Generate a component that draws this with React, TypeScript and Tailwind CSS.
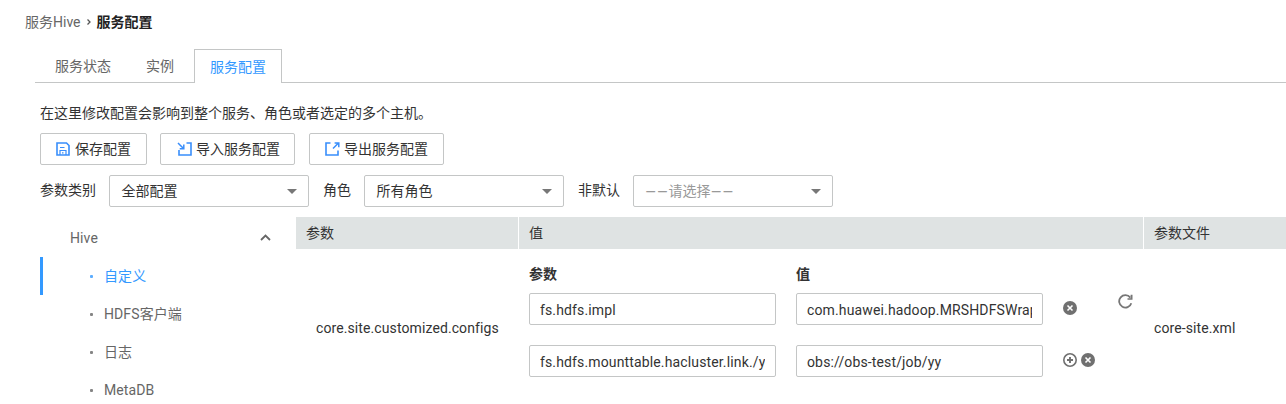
import React from "react";

const SaveIcon = () => (
  <svg width="14" height="14" viewBox="0 0 14 14" fill="none" stroke="#398efb" strokeWidth="1.6">
    <path d="M1 1H10.5L13 3.5V13H1Z" />
    <path d="M4 13V8.5H10V13M4 5.5H8.5M6 10.8H7.5" strokeWidth="1.2" />
  </svg>
);

const ImportIcon = () => (
  <svg width="15" height="14" viewBox="0 0 15 14" fill="none" stroke="#398efb" strokeWidth="1.6">
    <path d="M9.5 1H14V13H2V8" />
    <path d="M1 1L6 6M6.8 2.5V6.7H2.7" strokeWidth="1.5" />
  </svg>
);

const ExportIcon = () => (
  <svg width="15" height="14" viewBox="0 0 15 14" fill="none" stroke="#398efb" strokeWidth="1.6">
    <path d="M5.5 1H1V13H13V8.5" />
    <path d="M8 6.5L13 1.5M9.6 1H13.8V5.2" strokeWidth="1.5" />
  </svg>
);

const RemoveIcon = () => (
  <svg width="14" height="14" viewBox="0 0 14 14">
    <circle cx="7" cy="7" r="7" fill="#707070" />
    <path d="M4.5 4.5L9.5 9.5M9.5 4.5L4.5 9.5" stroke="#fff" strokeWidth="1.6" />
  </svg>
);

const AddIcon = () => (
  <svg width="14" height="14" viewBox="0 0 14 14" fill="none" stroke="#707070">
    <circle cx="7" cy="7" r="6.2" strokeWidth="1.6" />
    <path d="M7 4V10M4 7H10" strokeWidth="1.9" />
  </svg>
);

const RefreshIcon = () => (
  <svg width="15" height="15" viewBox="0 0 15 15">
    <path d="M12.3 3.6A6.2 6.2 0 1 0 13.3 9.2" fill="none" stroke="#777" strokeWidth="1.8" />
    <path d="M14.5 0.8V5.8H9.5V4.2H12.6V0.8Z" fill="#777" />
  </svg>
);

const Button = ({ icon, label, className }: { icon: React.ReactNode; label: string; className: string }) => (
  <button className={`flex h-8 items-center rounded-[2px] border border-[#c4c6c6] text-[#333] ${className}`}>
    {icon}
    <span>{label}</span>
  </button>
);

const Select = ({ value, muted }: { value: string; muted?: boolean }) => (
  <div className={`flex h-8 w-[200px] items-center justify-between rounded-[2px] border border-[#c4c6c6] pr-[11px] pl-[11.5px] ${muted ? "font-['DejaVu_Sans','Noto_Sans_CJK_SC',sans-serif] text-[#999]" : "text-[#333]"}`}>
    <span className={muted ? "-ml-[0.5px]" : ""}>{value}</span>
    <svg width="10" height="5" viewBox="0 0 10 5"><path d="M0 0H10L5 5Z" fill="#777" /></svg>
  </div>
);

const Field = ({ value }: { value: string }) => (
  <div className="h-8 w-[247px] rounded-[2px] border border-[#c4c6c6] px-2.5">
    <div className="overflow-hidden whitespace-nowrap leading-8 tracking-[0.14px]">{value}</div>
  </div>
);

const NavItem = ({ label, active }: { label: string; active?: boolean }) => (
  <li className={`flex h-[38px] items-center border-l-[3px] pl-[47px] ${active ? "border-[#3399ff] text-[#3399ff]" : "border-transparent text-[#666]"}`}>
    <span className="mr-[11px] size-[3px] rounded-[1px] bg-current opacity-80" />
    {label}
  </li>
);

export default function App() {
  return (
    <div className="h-[404px] w-[1286px] overflow-hidden bg-white font-[Roboto,'Noto_Sans_CJK_SC',sans-serif] text-[14px] leading-5 text-[#333]">
      <nav className="flex h-[49px] pt-3 pl-[25px]">
        <span className="text-[#666]">服务Hive</span>
        <svg className="mt-[7px] mr-[6px] ml-[6px]" width="4" height="6" viewBox="0 0 4 6" fill="none" stroke="#555" strokeWidth="1.3">
          <path d="M0.5 0.5L3 3L0.5 5.5" />
        </svg>
        <b className="font-bold text-[#222]">服务配置</b>
      </nav>
      <div className="ml-[35px] flex h-[34px] text-[#666]">
        <div className="w-[95px] border-b border-[#c4c6c6] pt-[7px] pl-5">服务状态</div>
        <div className="w-16 border-b border-[#c4c6c6] pt-[7px] pl-4">实例</div>
        <div className="w-[88px] border-x border-t border-[#c4c6c6] pt-[7px] pl-[15px] text-[#3399ff]">服务配置</div>
        <div className="flex-1 border-b border-[#c4c6c6]" />
      </div>
      <p className="mt-5 ml-10">在这里修改配置会影响到整个服务、角色或者选定的多个主机。</p>
      <div className="mt-[10px] ml-10 flex">
        <Button icon={<SaveIcon />} label="保存配置" className="mr-[13px] w-[107px] gap-[5px] pl-[15px]" />
        <Button icon={<ImportIcon />} label="导入服务配置" className="mr-[14px] w-[135px] gap-1 pl-4" />
        <Button icon={<ExportIcon />} label="导出服务配置" className="w-[135px] gap-1 pl-[15px]" />
      </div>
      <div className="mt-[10px] ml-10 flex items-center">
        <span className="mr-[13px] pb-0.5">参数类别</span>
        <Select value="全部配置" />
        <span className="mr-[13px] ml-[14px] pb-0.5">角色</span>
        <Select value="所有角色" />
        <span className="mr-[13px] ml-[14px] pb-0.5">非默认</span>
        <Select value="−−请选择−−" muted />
      </div>
      <div className="mt-[10px] flex">
        <aside className="ml-10 w-64">
          <div className="flex h-10 items-center justify-between pr-[25px] pl-[30px] text-[#666]">
            <span className="pt-0.5 tracking-[0.1px]">Hive</span>
            <svg width="11" height="7" viewBox="0 0 11 7" fill="none" stroke="#666" strokeWidth="1.8"><path d="M1 6L5.5 1.5L10 6" /></svg>
          </div>
          <ul className="tracking-[0.1px]">
            <NavItem label="自定义" active />
            <NavItem label="HDFS客户端" />
            <NavItem label="日志" />
            <NavItem label="MetaDB" />
          </ul>
        </aside>
        <main className="flex-1">
          <div className="grid h-8 grid-cols-[222px_624px_1fr] gap-px leading-8">
            <div className="bg-[#dfe3e3] pl-[10px]">参数</div>
            <div className="bg-[#dfe3e3] pl-[10px]">值</div>
            <div className="bg-[#dfe3e3] pl-[10px]">参数文件</div>
          </div>
          <div className="grid h-[158px] grid-cols-[222px_624px_1fr] gap-px">
            <div className="flex items-center pl-5 tracking-[0.1px]">core.site.customized.configs</div>
            <div className="flex pl-[10px]">
              <div className="grid grid-cols-[247px_247px_55px] grid-rows-[44px_52px_32px] gap-x-5">
                <b className="pt-[15px]">参数</b>
                <b className="pt-[15px]">值</b>
                <span />
                <Field value="fs.hdfs.impl" />
                <Field value="com.huawei.hadoop.MRSHDFSWrapperFileSystem" />
                <div className="pt-2"><RemoveIcon /></div>
                <Field value="fs.hdfs.mounttable.hacluster.link./yy" />
                <Field value="obs://obs-test/job/yy" />
                <div className="flex gap-1 pt-2"><AddIcon /><RemoveIcon /></div>
              </div>
              <div className="pt-[44.5px]"><RefreshIcon /></div>
            </div>
            <div className="flex items-center pl-[10px] tracking-[0.1px]">core-site.xml</div>
          </div>
        </main>
      </div>
    </div>
  );
}
